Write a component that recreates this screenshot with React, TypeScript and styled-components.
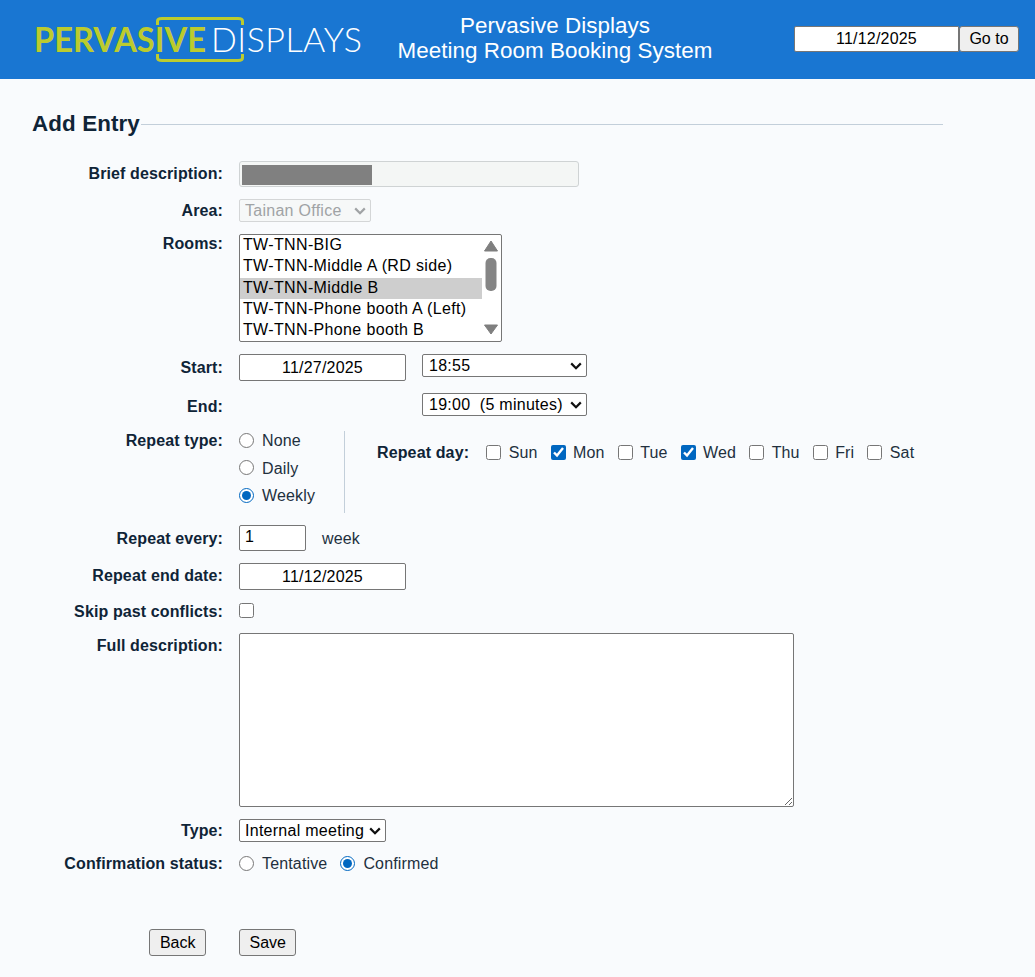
import React from "react";
import styled, { createGlobalStyle } from "styled-components";

const chevron = (c: string) =>
  `url("data:image/svg+xml,%3Csvg xmlns='http://www.w3.org/2000/svg' width='12' height='8' viewBox='0 0 12 8'%3E%3Cpath d='M1.2 1.4 L6 6.2 L10.8 1.4' fill='none' stroke='${c}' stroke-width='2.2'/%3E%3C/svg%3E")`;

const Global = createGlobalStyle`
  html, body { margin: 0; padding: 0; background: #f9fbfd; }
  body { font-family: "Liberation Sans", Arial, sans-serif; font-size: 16px; color: #1a2b3c; }
  * { box-sizing: border-box; }
  input, select, textarea, button { font-family: "Liberation Sans", Arial, sans-serif; font-size: 16px; }
  input[type="radio"], input[type="checkbox"] { accent-color: #0067c0; }
`;

const Page = styled.div`
  width: 1035px;
  height: 977px;
  overflow: hidden;
`;

const Header = styled.header`
  height: 79px;
  background: #1976d2;
  display: flex;
  align-items: flex-start;
  padding: 13px 16px 0 34px;
`;

const LogoSvg = styled.svg`
  width: 330px;
  height: 50px;
  flex: none;
`;

const TitleBlock = styled.h1`
  margin: 0 0 0 19px;
  flex: none;
  width: 344px;
  text-align: center;
  color: #fff;
  font-weight: 400;
  font-size: 22.4px;
  line-height: 25px;
  letter-spacing: 0.05px;
`;

const GoTo = styled.form`
  display: flex;
  margin: 13px 0 0 auto;
`;

const HeaderDate = styled.input`
  width: 165px;
  height: 26px;
  border: 1px solid #767676;
  border-radius: 2px 0 0 2px;
  background: #fff;
  color: #000;
  text-align: center;
  letter-spacing: 0.2px;
  padding: 0;
`;

const Button = styled.button`
  height: 27px;
  padding: 0 9.5px;
  background: #efefef;
  border: 1px solid #767676;
  border-radius: 3px;
  color: #000;
`;

const GoButton = styled(Button)`
  height: 26px;
  width: 60px;
  padding: 0;
`;

const Main = styled.main`
  padding: 30px 92px 0 32px;
`;

const Heading = styled.h2`
  margin: 0 0 22px;
  display: flex;
  align-items: center;
  font-size: 22.4px;
  line-height: 30px;
  font-weight: 700;
  letter-spacing: 0.1px;
  color: #0f2437;
  &::after {
    content: "";
    flex: 1;
    height: 1px;
    margin-left: 1px;
    background: #c3cfda;
  }
`;

const Form = styled.div`
  display: flex;
  flex-direction: column;
  gap: 12px;
`;

const Row = styled.div<{ $top?: number }>`
  display: grid;
  grid-template-columns: 191px 1fr;
  column-gap: 16px;
  align-items: start;
  margin-top: ${(p) => p.$top ?? 0}px;
`;

const Label = styled.label<{ $shift?: number }>`
  font-weight: 700;
  color: #0f2437;
  text-align: right;
  white-space: nowrap;
  line-height: 18px;
  letter-spacing: 0.11px;
  margin-top: ${(p) => p.$shift ?? 3}px;
`;

const Field = styled.div`
  display: flex;
  align-items: flex-start;
`;

const BriefBox = styled.div`
  width: 340px;
  height: 26px;
  padding: 3px 2px;
  background: #f4f6f5;
  border: 1px solid #cfd3d4;
  border-radius: 3px;
`;

const Redaction = styled.div`
  width: 130px;
  height: 20px;
  background: #808080;
`;

const Select = styled.select<{ $w: number }>`
  appearance: none;
  width: ${(p) => p.$w}px;
  height: 23px;
  padding: 0 20px 0 5px;
  letter-spacing: 0.27px;
  background: #fff ${chevron("%23111")} no-repeat right 4px center;
  border: 1px solid #767676;
  border-radius: 2px;
  color: #000;
  &:disabled {
    opacity: 1;
    color: #a0a3a5;
    background: #f6f8f8 ${chevron("%23a0a3a5")} no-repeat right 4px center;
    border-color: #d4d6d7;
  }
`;

const ListBox = styled.div`
  position: relative;
  width: 263px;
  height: 108px;
  background: #fff;
  border: 1px solid #767676;
  border-radius: 2px;
`;

const ListItem = styled.div<{ $on?: boolean }>`
  width: 242px;
  height: 21.3px;
  line-height: 19px;
  padding-left: 3px;
  letter-spacing: 0.35px;
  color: #000;
  white-space: nowrap;
  background: ${(p) => (p.$on ? "#cecece" : "transparent")};
`;

const ScrollArt = styled.svg`
  position: absolute;
  right: 0;
  top: 0;
  width: 20px;
  height: 106px;
`;

const DateInput = styled.input`
  width: 167px;
  height: 27px;
  background: #fff;
  border: 1px solid #767676;
  border-radius: 2px;
  text-align: center;
  letter-spacing: 0.2px;
  color: #000;
  padding: 0;
`;

const TimeSelect = styled(Select)`
  margin-left: 16px;
  padding-left: 6px;
`;

const EndSpacer = styled.div`
  width: 167px;
  flex: none;
`;

const RepeatWrap = styled.div`
  display: flex;
  align-items: flex-start;
`;

const RepeatTypes = styled.div`
  width: 106px;
  height: 82px;
  border-right: 1px solid #c3cfda;
  display: flex;
  flex-direction: column;
  gap: 9.5px;
`;

const Choice = styled.label<{ $gap?: number }>`
  display: inline-flex;
  align-items: flex-start;
  height: 18px;
  line-height: 20px;
  letter-spacing: 0.15px;
  color: #22303e;
  white-space: nowrap;
  margin-right: ${(p) => p.$gap ?? 0}px;
`;

const Radio = styled.input.attrs({ type: "radio" })`
  width: 15px;
  height: 15px;
  margin: 1.5px 8px 0 0;
  flex: none;
`;

const Check = styled.input.attrs({ type: "checkbox" })`
  width: 15px;
  height: 15px;
  margin: 1.5px 7.5px 0 0;
  flex: none;
`;

const DaysRow = styled.div`
  display: flex;
  align-items: center;
  height: 18px;
  margin: 12px 0 0 32px;
  gap: 13px;
`;

const DaysLabel = styled.span`
  font-weight: 700;
  color: #0f2437;
  letter-spacing: 0.13px;
  margin: 2px 4px 0 0;
`;

const NumberBox = styled.input`
  width: 67px;
  height: 26px;
  background: #fff;
  border: 1px solid #767676;
  border-radius: 2px;
  padding: 0 5px 2px;
  color: #000;
`;

const Unit = styled.span`
  margin: 5px 0 0 16px;
  line-height: 18px;
  letter-spacing: 0.1px;
  color: #22303e;
`;

const Skip = styled(Check)`
  margin: 0;
`;

const TextArea = styled.textarea`
  width: 555px;
  height: 174px;
  background: #fff;
  border: 1px solid #767676;
  border-radius: 2px;
  display: block;
`;

const Actions = styled.div`
  display: grid;
  grid-template-columns: 174px auto;
  column-gap: 33px;
  justify-content: start;
  margin-top: 56px;
  justify-items: end;
`;

const days: [string, boolean][] = [
  ["Sun", false],
  ["Mon", true],
  ["Tue", false],
  ["Wed", true],
  ["Thu", false],
  ["Fri", false],
  ["Sat", false],
];

const rooms = [
  "TW-TNN-BIG",
  "TW-TNN-Middle A (RD side)",
  "TW-TNN-Middle B",
  "TW-TNN-Phone booth A (Left)",
  "TW-TNN-Phone booth B",
];

const Logo = () => (
  <LogoSvg viewBox="0 0 330 50" aria-label="Pervasive Displays logo">
    <g fontFamily="Lato, 'Open Sans', sans-serif" fontSize="34">
      <text x="0" y="39" fill="#bccb2e" fontWeight="700" textLength="172" lengthAdjust="spacingAndGlyphs">PERVASIVE</text>
      <text x="177" y="39" fill="#fff" fontWeight="300" textLength="151" lengthAdjust="spacing">DISPLAYS</text>
    </g>
    <path
      d="M123.5 12 V8 Q123.5 5.5 128 5.5 H204 Q208.5 5.5 208.5 8 V12 M123.5 41 V45 Q123.5 47.5 128 47.5 H204 Q208.5 47.5 208.5 45 V41"
      fill="none"
      stroke="#bccb2e"
      strokeWidth="3"
    />
  </LogoSvg>
);

export default function App() {
  return (
    <Page>
      <Global />
      <Header>
        <Logo />
        <TitleBlock>
          Pervasive Displays
          <br />
          Meeting Room Booking System
        </TitleBlock>
        <GoTo>
          <HeaderDate readOnly value="11/12/2025" />
          <GoButton type="button">Go to</GoButton>
        </GoTo>
      </Header>
      <Main>
        <Heading>Add Entry</Heading>
        <Form>
          <Row>
            <Label $shift={4}>Brief description:</Label>
            <Field>
              <BriefBox>
                <Redaction />
              </BriefBox>
            </Field>
          </Row>
          <Row>
            <Label>Area:</Label>
            <Field>
              <Select $w={132} disabled defaultValue="Tainan Office">
                <option>Tainan Office</option>
              </Select>
            </Field>
          </Row>
          <Row>
            <Label $shift={1}>Rooms:</Label>
            <Field>
              <ListBox>
                {rooms.map((r, i) => (
                  <ListItem key={r} $on={i === 2}>
                    {r}
                  </ListItem>
                ))}
                <ScrollArt viewBox="0 0 20 106">
                  <path d="M3.5 16 L10 6 L16.5 16 Z" fill="#7f7f7f" stroke="#7f7f7f" strokeLinejoin="round" />
                  <rect x="4.5" y="23" width="11" height="33" rx="5" fill="#858585" />
                  <path d="M3.5 90 L16.5 90 L10 99 Z" fill="#7f7f7f" stroke="#7f7f7f" strokeLinejoin="round" />
                </ScrollArt>
              </ListBox>
            </Field>
          </Row>
          <Row>
            <Label $shift={5}>Start:</Label>
            <Field>
              <DateInput readOnly value="11/27/2025" />
              <TimeSelect $w={165} defaultValue="18:55">
                <option>18:55</option>
              </TimeSelect>
            </Field>
          </Row>
          <Row>
            <Label $shift={5}>End:</Label>
            <Field>
              <EndSpacer />
              <TimeSelect $w={165} defaultValue="19:00  (5 minutes)">
                <option>19:00&nbsp;&nbsp;(5 minutes)</option>
              </TimeSelect>
            </Field>
          </Row>
          <Row $top={3}>
            <Label $shift={1}>Repeat type:</Label>
            <RepeatWrap>
              <RepeatTypes>
                <Choice>
                  <Radio name="rep" />
                  None
                </Choice>
                <Choice>
                  <Radio name="rep" />
                  Daily
                </Choice>
                <Choice>
                  <Radio name="rep" defaultChecked />
                  Weekly
                </Choice>
              </RepeatTypes>
              <DaysRow>
                <DaysLabel>Repeat day:</DaysLabel>
                {days.map(([d, on]) => (
                  <Choice key={d}>
                    <Check defaultChecked={on} />
                    {d}
                  </Choice>
                ))}
              </DaysRow>
            </RepeatWrap>
          </Row>
          <Row>
            <Label $shift={5}>Repeat every:</Label>
            <Field>
              <NumberBox readOnly value="1" />
              <Unit>week</Unit>
            </Field>
          </Row>
          <Row>
            <Label $shift={4}>Repeat end date:</Label>
            <Field>
              <DateInput readOnly value="11/12/2025" />
            </Field>
          </Row>
          <Row $top={1}>
            <Label $shift={0}>Skip past conflicts:</Label>
            <Field>
              <Skip />
            </Field>
          </Row>
          <Row>
            <Label $shift={4}>Full description:</Label>
            <Field>
              <TextArea />
            </Field>
          </Row>
          <Row>
            <Label>Type:</Label>
            <Field>
              <Select $w={147} defaultValue="Internal meeting">
                <option>Internal meeting</option>
              </Select>
            </Field>
          </Row>
          <Row>
            <Label $shift={1}>Confirmation status:</Label>
            <Field>
              <Choice $gap={13}>
                <Radio name="conf" />
                Tentative
              </Choice>
              <Choice>
                <Radio name="conf" defaultChecked />
                Confirmed
              </Choice>
            </Field>
          </Row>
        </Form>
        <Actions>
          <Button type="button">Back</Button>
          <Button type="button">Save</Button>
        </Actions>
      </Main>
    </Page>
  );
}
